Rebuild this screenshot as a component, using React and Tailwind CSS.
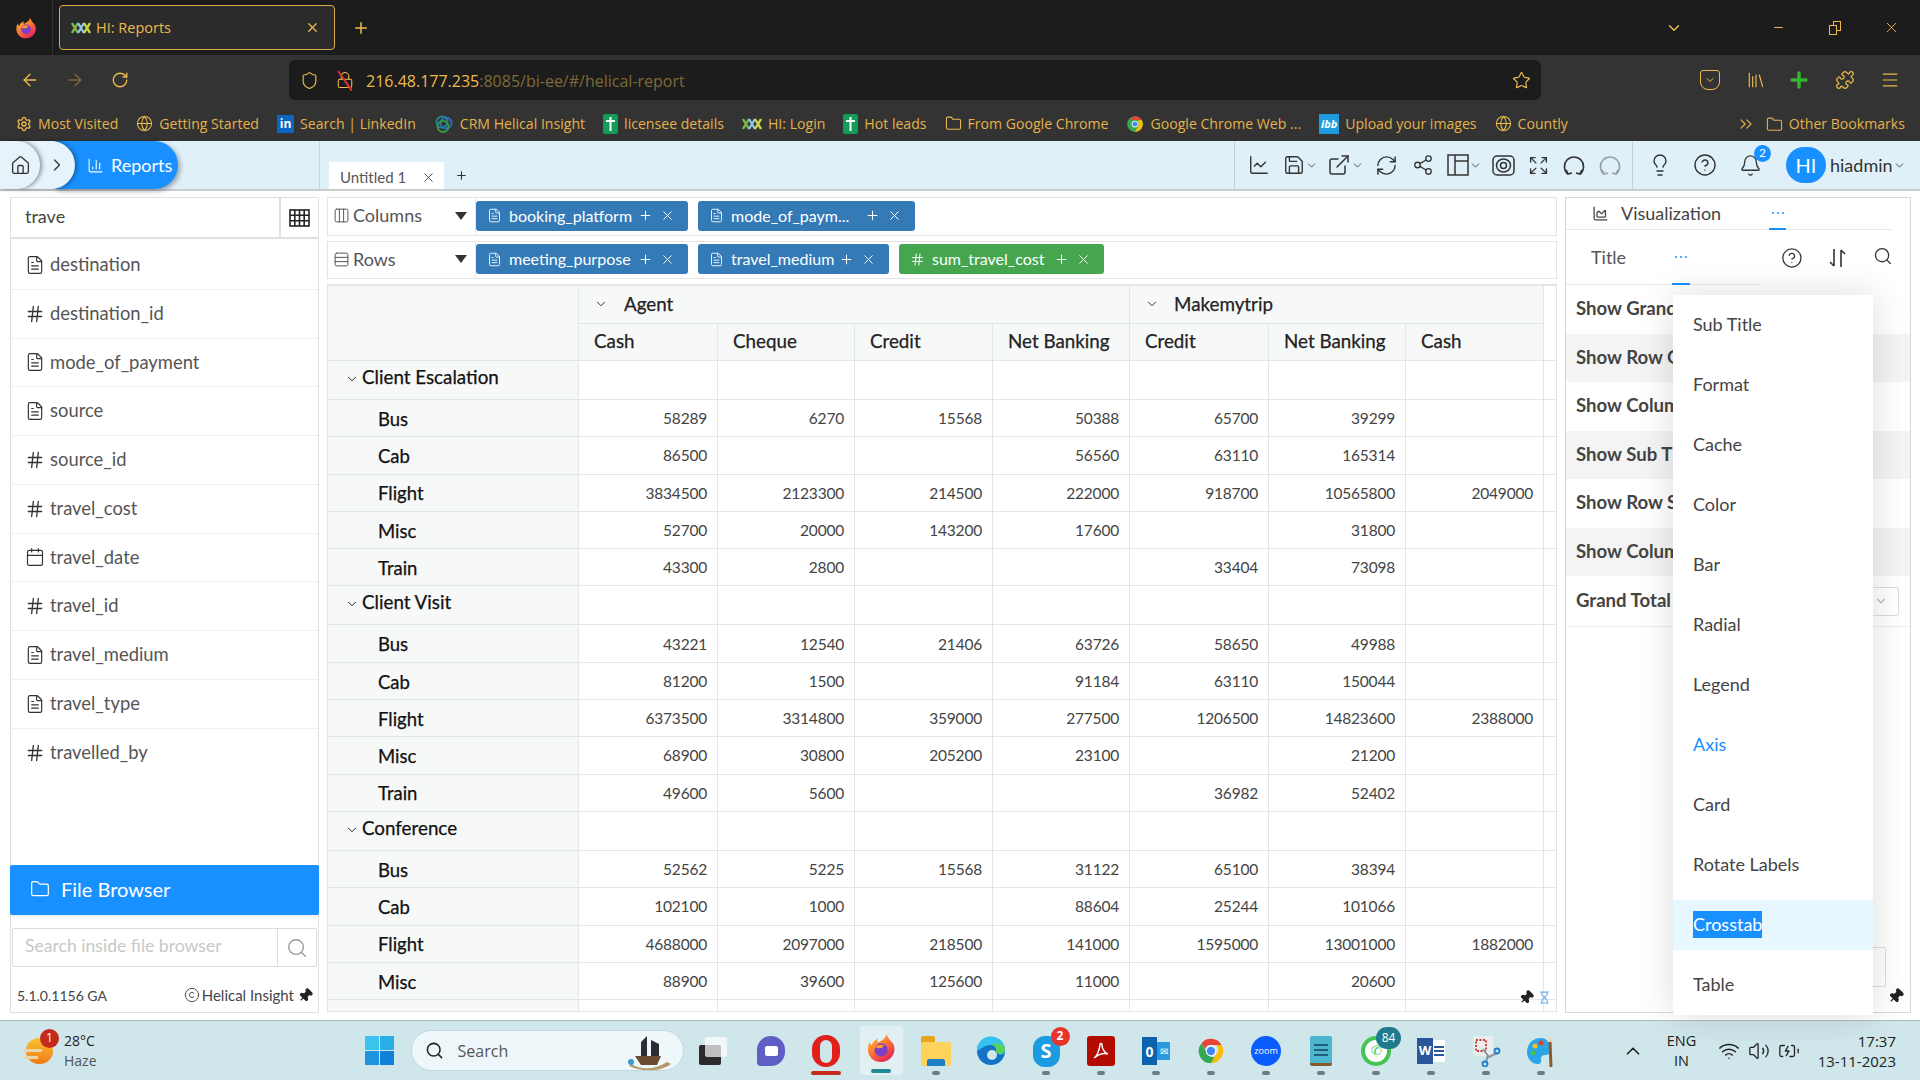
import {
  ArrowLeft, ArrowRight, RotateCw, Star, ChevronDown, ChevronRight, ChevronUp, X, Plus, Minus,
  ChartLine, Save, ExternalLink, RefreshCw, Share2, Expand, Lightbulb, CircleHelp, Bell, Home,
  ChartColumn, FileText, Hash, Calendar, Columns3, Rows3, Folder, Search, Pin,
  Copyright, Globe, Menu, Library, Puzzle, Settings, ChevronsRight, Wifi, Volume2, BatteryCharging,
  Lock, Hourglass, ChartArea, Shield,
} from "lucide-react";

const amber = "#edbb4d";

const HiLogo = () => (
  <svg width="20" height="14" viewBox="0 0 20 14">
    <path d="M1 2l6 10M7 2L1 12" stroke="#7fb84a" strokeWidth="2.4" />
    <path d="M7 2l6 10M13 2L7 12" stroke="#8fc6e8" strokeWidth="2.4" />
    <path d="M13 2l6 10M19 2l-6 10" stroke="#c8d84a" strokeWidth="2.4" />
  </svg>
);

const GreenPlus = () => (
  <div className="flex h-5 w-[15px] items-center justify-center rounded-[2px] bg-[#0f9d58]">
    <svg width="11" height="16" viewBox="0 0 11 16"><path d="M5.5 1v14M1 5h9" stroke="#fff" strokeWidth="2" /></svg>
  </div>
);

const Firefox = ({ size = 22 }) => (
  <svg width={size} height={size} viewBox="0 0 32 32">
    <defs>
      <linearGradient id="ffa" x1="0" y1="0" x2="0.7" y2="1">
        <stop offset="0" stopColor="#ffd43a" />
        <stop offset="0.5" stopColor="#ff7a2f" />
        <stop offset="1" stopColor="#e5245e" />
      </linearGradient>
    </defs>
    <path d="M22 1c1 4 3 6 6 9 3 4 3 9 1 13-3 6-8 8-13 8C8 31 2 25 2 17c0-3 1-6 2-8 0 2 1 3 2 4 1-4 4-6 7-7-1 2-1 3 0 4 4-2 8-4 9-9z" fill="url(#ffa)" />
    <circle cx="16" cy="18" r="7" fill="#7b3fc9" />
    <path d="M9 15c3-3 7-3 11-2-3 1-3 2-2 3-3 0-6 1-9-1z" fill="#ff9a2f" />
  </svg>
);

const Chrome = () => (
  <svg width="28" height="30" viewBox="0 0 32 32">
    <path d="M16 2a14 14 0 0 1 12.1 7H16a7 7 0 0 0-6.6 4.6L5.2 7A14 14 0 0 1 16 2z" fill="#ea4335" />
    <path d="M28.1 9A14 14 0 0 1 16 30l6-10.500A7 7 0 0 0 22 9z" fill="#fbbc05" />
    <path d="M16 30A14 14 0 0 1 5.200 7L11 17a7 7 0 0 0 9 5.500z" fill="#34a853" />
    <circle cx="16" cy="16" r="6" fill="#fff" />
    <circle cx="16" cy="16" r="4.800" fill="#4285f4" />
  </svg>
);

const bookmarks = [
  [<Settings size={16} color={amber} />, "Most Visited"],
  [<Globe size={17} color={amber} strokeWidth={1.5} />, "Getting Started"],
  [<div className="flex h-[18px] w-[17px] items-center justify-center bg-[#0a66c2] text-[12px] font-bold text-white">in</div>, "Search | LinkedIn"],
  [
    <svg width="20" height="20" viewBox="0 0 20 20" fill="none" strokeWidth="1.8">
      <circle cx="8" cy="8" r="5.500" stroke="#1f8a8a" />
      <circle cx="12" cy="9" r="5.500" stroke="#2c6fbb" />
      <circle cx="9" cy="12.500" r="5.500" stroke="#3a9a4a" />
    </svg>,
    "CRM Helical Insight",
  ],
  [<GreenPlus />, "licensee details"],
  [<HiLogo />, "HI: Login"],
  [<GreenPlus />, "Hot leads"],
  [<Folder size={17} color={amber} strokeWidth={1.5} />, "From Google Chrome"],
  [<div className="flex w-[18px]"><svg width="18" height="18" viewBox="0 0 32 32"><circle cx="16" cy="16" r="14" fill="#34a853" /><path d="M16 2a14 14 0 0 1 12.100 7H7A14 14 0 0 1 16 2z" fill="#ea4335" /><path d="M28 9a14 14 0 0 1-12 21l6-11V9z" fill="#fbbc05" /><circle cx="16" cy="16" r="6" fill="#fff" /><circle cx="16" cy="16" r="4.500" fill="#4285f4" /></svg></div>, "Google Chrome Web ..."],
  [<div className="flex h-5 w-5 items-center justify-center bg-[#1d9bdc] text-[11px] font-bold italic text-white">ibb</div>, "Upload your images"],
  [<Globe size={17} color={amber} strokeWidth={1.5} />, "Countly"],
];

function BrowserChrome() {
  return (
    <div className="font-['Open_Sans',sans-serif]">
      <div className="flex h-[55px] items-center bg-[#1c1c1c] text-[#edbb4d]">
        <div className="flex h-full w-[53px] items-center justify-center border-r border-[#333]">
          <Firefox />
        </div>
        <div className="ml-[6px] flex h-[45px] w-[276px] items-center rounded-[4px] border border-[#d9ad46] bg-[#2b2b2b] pl-[11px] pr-[14px]">
          <HiLogo />
          <span className="ml-[5px] text-[14.500px]">HI: Reports</span>
          <X size={15} className="ml-auto" />
        </div>
        <Plus size={18} className="ml-[17px]" />
        <ChevronDown size={18} className="ml-auto" />
        <Minus size={13} className="ml-[89px]" />
        <div className="relative ml-[44px] h-[14px] w-[12px]">
          <div className="absolute right-0 top-0 h-[10px] w-[8px] border border-[#edbb4d]" />
          <div className="absolute bottom-0 left-0 h-[10px] w-[8px] border border-[#edbb4d] bg-[#1c1c1c]" />
        </div>
        <X size={17} strokeWidth={1.3} className="ml-[42px] mr-[20px]" />
      </div>

      <div className="flex h-[55px] items-center bg-[#333] pb-[5px] text-[#edbb4d]">
        <ArrowLeft size={20} strokeWidth={1.6} className="ml-[20px]" />
        <ArrowRight size={20} strokeWidth={1.6} className="ml-[25px] opacity-40" />
        <RotateCw size={18} strokeWidth={1.8} className="ml-[26px]" />
        <div className="ml-[160px] flex h-10 w-[1252px] items-center rounded-[6px] bg-[#1c1c1c] pl-[11px] pr-[10px]">
          <Shield size={19} strokeWidth={1.4} />
          <div className="relative ml-[17px]">
            <Lock size={18} strokeWidth={1.4} />
            <div className="absolute left-[8px] top-[-2px] h-[24px] w-[1.5px] -rotate-[35deg] bg-[#e0342c]" />
          </div>
          <span className="ml-[12px] pt-[2px] text-[16px]">
            216.48.177.235<span className="text-[#7d6a38]">:8085/bi-ee/#/helical-report</span>
          </span>
          <Star size={19} strokeWidth={1.5} className="ml-auto" />
        </div>
        <div className="ml-[159px] flex h-5 w-5 items-center justify-center rounded-b-[8px] rounded-t-[3px] border-[1.5px] border-[#edbb4d]">
          <ChevronDown size={12} />
        </div>
        <Library size={20} strokeWidth={1.4} className="ml-[26px]" />
        <Plus size={24} strokeWidth={3.5} color="#37b332" className="ml-[21px]" />
        <Puzzle size={20} strokeWidth={1.5} className="ml-[24px]" />
        <Menu size={20} strokeWidth={1.4} className="ml-[25px]" />
      </div>

      <div className="flex h-[31px] items-center bg-[#333] pb-[3px] pl-[16px] pr-[15px] text-[14.100px] text-[#e3b24a]">
        <div className="flex items-center gap-[18px]">
          {bookmarks.map(([icon, label]) => (
            <div key={label} className="flex items-center gap-[6px] whitespace-nowrap">
              {icon}
              <span>{label}</span>
            </div>
          ))}
        </div>
        <ChevronsRight size={20} strokeWidth={1.4} className="ml-auto" />
        <Folder size={17} strokeWidth={1.5} className="ml-[10px]" />
        <span className="ml-[6px]">Other Bookmarks</span>
      </div>
    </div>
  );
}

const ArcIcon = ({ gray }) => (
  <svg width="22" height="24" viewBox="0 0 22 24" fill="none" stroke={gray ? "#9aa0a3" : "#333"} strokeWidth="1.7">
    <path d="M5 21c-5-4-4-11-1-14 4-4 10-4 14 0 3 3 4 10-1 14" />
    <path d="M3 17l2 4 4-1M19 17l-2 4-4-1" />
  </svg>
);

function AppHeader() {
  return (
    <div className="flex h-[50px] items-stretch border-b-2 border-[#c9cdd0] bg-[#dff0f9] text-[#333]">
      <div className="flex w-[320px] border-r border-[#c9d6dd]">
        <div className="z-20 flex w-10 items-center justify-center rounded-r-full bg-[#e6f3fa] shadow-[2px_0_4px_rgba(0,0,0,0.4)]">
          <Home size={21} strokeWidth={1.5} />
        </div>
        <div className="z-10 -ml-5 flex w-[55px] items-center justify-end rounded-r-full bg-[#e6f3fa] pr-[8px] shadow-[2px_0_4px_rgba(0,0,0,0.35)]">
          <ChevronRight size={20} strokeWidth={1.5} />
        </div>
        <div className="-ml-5 flex w-[123px] items-center gap-[7px] rounded-r-full bg-[#1890ff] pl-[32px] text-[18px] text-white shadow-[2px_2px_5px_rgba(0,0,0,0.35)]">
          <ChartColumn size={17} strokeWidth={1.5} />
          Reports
        </div>
      </div>
      <div className="ml-[9px] flex items-end">
        <div className="flex h-[27px] w-[115px] items-center bg-white pl-[11px] pr-2 pt-[4px] text-[15px] text-[#555]">
          Untitled 1
          <X size={15} strokeWidth={1.3} className="ml-auto text-[#333]" />
        </div>
        <div className="ml-[7px] flex h-[27px] w-[21px] items-center justify-center">
          <Plus size={13} />
        </div>
      </div>
      <div className="ml-auto flex w-[686px] items-center border-l border-[#c3cdd2] pl-[13px]">
        <ChartLine size={22} strokeWidth={1.5} />
        <Save size={22} strokeWidth={1.5} className="ml-[13px]" />
        <ChevronDown size={13} strokeWidth={1.5} />
        <ExternalLink size={24} strokeWidth={1.5} className="ml-[9px]" />
        <ChevronDown size={13} strokeWidth={1.5} />
        <RefreshCw size={23} strokeWidth={1.5} className="ml-[11px]" />
        <Share2 size={22} strokeWidth={1.4} className="ml-[14px]" />
        <svg width="22" height="22" viewBox="0 0 22 22" fill="none" stroke="#333" strokeWidth="1.500" className="ml-[13px]">
          <rect x="1" y="1" width="20" height="20" />
          <path d="M8 1v20M8 7h13" />
        </svg>
        <ChevronDown size={13} strokeWidth={1.5} />
        <svg width="23" height="21" viewBox="0 0 23 21" fill="none" stroke="#333" strokeWidth="1.500" className="ml-[10px]">
          <rect x="1" y="1" width="21" height="19" rx="4" />
          <ellipse cx="11.500" cy="10.500" rx="7" ry="6.500" />
          <circle cx="11.500" cy="10.500" r="3" />
        </svg>
        <Expand size={21} strokeWidth={1.6} className="ml-[13px]" />
        <div className="ml-[14px] flex">
          <ArcIcon />
        </div>
        <div className="ml-[14px] flex">
          <ArcIcon gray />
        </div>
        <div className="ml-[11px] flex h-full flex-1 items-center border-l border-[#c3cdd2] pl-[15px]">
          <Lightbulb size={24} strokeWidth={1.4} />
          <CircleHelp size={24} strokeWidth={1.4} className="ml-[21px]" />
          <div className="relative ml-[22px]">
            <Bell size={23} strokeWidth={1.4} />
            <div className="absolute -right-[9px] -top-[9px] flex h-[17px] w-[17px] items-center justify-center rounded-full bg-[#1890ff] text-[12px] text-white">
              2
            </div>
          </div>
          <div className="ml-[24px] flex h-9 w-10 items-center justify-center rounded-full bg-[#1890ff] text-[20px] text-white">
            HI
          </div>
          <span className="ml-[4px] text-[18px]">hiadmin</span>
          <ChevronDown size={13} strokeWidth={1.5} />
        </div>
      </div>
    </div>
  );
}

const fields = [
  ["t", "destination"],
  ["h", "destination_id"],
  ["t", "mode_of_payment"],
  ["t", "source"],
  ["h", "source_id"],
  ["h", "travel_cost"],
  ["d", "travel_date"],
  ["h", "travel_id"],
  ["t", "travel_medium"],
  ["t", "travel_type"],
  ["h", "travelled_by"],
];

function FieldIcon({ type }) {
  if (type === "h") return <Hash size={20} strokeWidth={1.6} className="text-[#333]" />;
  if (type === "d") return <Calendar size={20} strokeWidth={1.4} className="text-[#333]" />;
  return <FileText size={20} strokeWidth={1.4} className="text-[#333]" />;
}

function Sidebar() {
  return (
    <div className="flex w-[310px] flex-col border border-[#e0e0e0] bg-white">
      <div className="flex h-[41px] border-b-2 border-[#e0e0e0]">
        <div className="flex flex-1 items-center border-r-2 border-[#e0e0e0] pb-[2px] pl-[14px] text-[18px] text-[#444]">trave</div>
        <div className="flex w-[37px] items-center justify-center">
          <svg width="21" height="18" viewBox="0 0 21 18" fill="none" stroke="#222" strokeWidth="1.600">
            <rect x="1" y="1" width="19" height="16" />
            <path d="M1 6.300h19M1 11.700h19M5.800 1v16M10.500 1v16M15.200 1v16" />
          </svg>
        </div>
      </div>
      <div className="flex-1 pt-[2px]">
        {fields.map(([type, name]) => (
          <div key={name} className="flex h-[48.750px] items-center gap-[5px] border-b border-[#f0f0f0] pl-[14px] text-[18.400px] text-[#555] last:border-b-0">
            <FieldIcon type={type} />
            {name}
          </div>
        ))}
      </div>
      <div className="-mx-px flex h-[50px] items-center gap-[11px] rounded-[2px] bg-[#1890ff] pb-[3px] pl-[20px] text-[20px] text-white shadow-[0_3px_3px_rgba(0,0,0,0.06)]">
        <Folder size={20} strokeWidth={1.5} />
        File Browser
      </div>
      <div className="mx-[1px] mt-[13px] flex h-[39px] rounded-[2px] border border-[#dcdcdc]">
        <div className="flex flex-1 items-center border-r border-[#dcdcdc] pb-[2px] pl-[12px] text-[17.600px] text-[#c8c8c8]">Search inside file browser</div>
        <div className="flex w-[38px] items-center justify-center text-[#999]">
          <Search size={22} strokeWidth={1.5} />
        </div>
      </div>
      <div className="flex h-[45px] items-center pl-[6px] pr-[5px] pt-[11px] text-[14px] text-[#444]">
        5.1.0.1156 GA
        <div className="ml-auto flex items-center gap-[2px] text-[15px]">
          <Copyright size={16} strokeWidth={1.4} />
          Helical Insight
          <Pin size={15} fill="#222" className="ml-[2px] rotate-45 text-[#222]" />
        </div>
      </div>
    </div>
  );
}

function FieldPill({ icon, name, green, w }) {
  return (
    <div className={`flex h-[30px] items-center rounded-[3px] pl-[11px] pr-[13px] text-[16px] text-white ${green ? "bg-[#45a64f]" : "bg-[#337ab7]"} ${w}`}>
      {icon === "h" ? <Hash size={15} strokeWidth={1.6} /> : <FileText size={15} strokeWidth={1.4} />}
      <span className="ml-[7px]">{name}</span>
      <Plus size={15} strokeWidth={1.6} className="ml-auto" />
      <X size={15} strokeWidth={1.6} className="ml-[7px]" />
    </div>
  );
}

function ShelfRow({ icon, label, h, children }) {
  return (
    <div className={`flex items-center border border-[#e4e4e4] bg-white ${h}`}>
      <div className="flex h-full w-[147px] items-center pb-[2px] pl-[5px] text-[18px] text-[#555]">
        {icon}
        <span className="ml-[3px]">{label}</span>
        <div className="ml-auto mr-[8px] h-0 w-0 border-x-[6px] border-t-[8px] border-x-transparent border-t-[#333]" />
      </div>
      <div className="flex h-full items-center gap-[10px] border-l border-[#e4e4e4] pb-[2px]">{children}</div>
    </div>
  );
}

const groups = [
  ["Client Escalation", [
    ["Bus", "58289", "6270", "15568", "50388", "65700", "39299", ""],
    ["Cab", "86500", "", "", "56560", "63110", "165314", ""],
    ["Flight", "3834500", "2123300", "214500", "222000", "918700", "10565800", "2049000"],
    ["Misc", "52700", "20000", "143200", "17600", "", "31800", ""],
    ["Train", "43300", "2800", "", "", "33404", "73098", ""],
  ]],
  ["Client Visit", [
    ["Bus", "43221", "12540", "21406", "63726", "58650", "49988", ""],
    ["Cab", "81200", "1500", "", "91184", "63110", "150044", ""],
    ["Flight", "6373500", "3314800", "359000", "277500", "1206500", "14823600", "2388000"],
    ["Misc", "68900", "30800", "205200", "23100", "", "21200", ""],
    ["Train", "49600", "5600", "", "", "36982", "52402", ""],
  ]],
  ["Conference", [
    ["Bus", "52562", "5225", "15568", "31122", "65100", "38394", ""],
    ["Cab", "102100", "1000", "", "88604", "25244", "101066", ""],
    ["Flight", "4688000", "2097000", "218500", "141000", "1595000", "13001000", "1882000"],
    ["Misc", "88900", "39600", "125600", "11000", "", "20600", ""],
  ]],
];

const cols = "grid grid-cols-[251px_139px_137px_138px_137px_139px_137px_138px_13px]";
const cell = "border-b border-r border-[#e4e7ea]";
const blanks = [0, 1, 2, 3, 4, 5, 6, 7];
const heavy = "[-webkit-text-stroke:0.25px_currentColor]";

function Crosstab() {
  return (
    <div className="flex-1 overflow-hidden border-x border-t-2 border-[#e4e4e4] bg-white">
      <div className={cols}>
        <div className={`row-span-2 bg-[#f7f8f8] ${cell}`} />
        <div className={`col-span-4 flex h-[37.500px] items-center bg-[#f7f8f8] pl-[15px] text-[18.800px] text-[#222] ${heavy} ${cell}`}>
          <ChevronDown size={14} strokeWidth={1.6} />
          <span className="ml-[16px]">Agent</span>
        </div>
        <div className={`col-span-3 flex h-[37.500px] items-center bg-[#f7f8f8] pl-[15px] text-[18.800px] text-[#222] ${heavy} ${cell}`}>
          <ChevronDown size={14} strokeWidth={1.6} />
          <span className="ml-[15px]">Makemytrip</span>
        </div>
        <div className={`row-span-2 bg-white ${cell}`} />
        {["Cash", "Cheque", "Credit", "Net Banking", "Credit", "Net Banking", "Cash"].map((c, i) => (
          <div key={i} className={`flex h-[37.500px] items-center bg-[#f7f8f8] pb-[2px] pl-[15px] text-[18.800px] text-[#222] ${heavy} ${cell}`}>
            {c}
          </div>
        ))}
      </div>
      {groups.map(([name, rows]) => (
        <div key={name}>
          <div className={cols}>
            <div className={`flex h-[39px] items-start bg-[#f7f8f8] pl-[17px] pt-[2px] text-[18.800px] text-[#111] ${heavy} ${cell}`}>
              <ChevronDown size={14} strokeWidth={1.6} className="mt-[9px]" />
              <span className="ml-[3px]">{name}</span>
            </div>
            {blanks.map((b) => <div key={b} className={cell} />)}
          </div>
          {rows.map(([label, ...vals]) => (
            <div key={label} className={cols}>
              <div className={`flex h-[37.300px] items-center bg-[#f7f8f8] pl-[50px] pt-[3px] text-[18.500px] text-[#111] ${heavy} ${cell}`}>{label}</div>
              {vals.map((v, i) => (
                <div key={i} className={`flex items-center justify-end pr-[10px] pt-[1px] text-[15.500px] tracking-[-0.2px] text-[#444] ${cell}`}>{v}</div>
              ))}
              <div className={cell} />
            </div>
          ))}
        </div>
      ))}
      <div className={cols}>
        <div className={`h-[12px] bg-[#f7f8f8] ${cell}`} />
        {blanks.map((b) => <div key={b} className={cell} />)}
      </div>
    </div>
  );
}

const configRows = [
  ["Show Grand", false],
  ["Show Row G", true],
  ["Show Colum", false],
  ["Show Sub T", true],
  ["Show Row S", false],
  ["Show Colum", true],
];

const menuItems = ["Sub Title", "Format", "Cache", "Color", "Bar", "Radial", "Legend", "Axis", "Card", "Rotate Labels"];

const BlueDots = () => (
  <div className="flex gap-[3px]">
    <div className="h-[2px] w-[2px] rounded-full bg-[#1890ff]" />
    <div className="h-[2px] w-[2px] rounded-full bg-[#1890ff]" />
    <div className="h-[2px] w-[2px] rounded-full bg-[#1890ff]" />
  </div>
);

function SortIcon() {
  return (
    <svg width="18" height="20" viewBox="0 0 18 20" fill="none" stroke="#333" strokeWidth="1.600">
      <path d="M5 1v17M1 14l4 4" />
      <path d="M12 19V2M12 2l4 4" />
    </svg>
  );
}

function RightPanel() {
  return (
    <div className="relative flex w-[346px] flex-col border border-[#d8d8d8] bg-white">
      <div className="mr-[18px] flex h-[32px] items-center border-b border-[#e8e8e8] pl-[26px] text-[18px] text-[#444]">
        <ChartArea size={17} strokeWidth={1.8} />
        <span className="ml-[12px]">Visualization</span>
        <div className="relative ml-[48px] flex h-full w-[17px] items-center justify-center pb-[2px]">
          <BlueDots />
          <div className="absolute -bottom-px left-0 h-[2px] w-full bg-[#1890ff]" />
        </div>
      </div>
      <div className="flex h-[55px] items-center pr-[17px]">
        <div className="flex h-full w-[197px] items-center border-b border-[#e8e8e8] pl-[25px] text-[18px] text-[#555]">
          Title
          <div className="relative ml-[46px] flex h-full w-[18px] items-center justify-center">
            <BlueDots />
            <div className="absolute -bottom-px left-0 h-[2px] w-full bg-[#1890ff]" />
          </div>
        </div>
        <CircleHelp size={22} strokeWidth={1.4} className="ml-[20px] text-[#333]" />
        <div className="ml-[26px] flex"><SortIcon /></div>
        <Search size={20} strokeWidth={1.6} className="mb-[3px] ml-[26px] text-[#333]" />
      </div>
      {configRows.map(([label, gray], i) => (
        <div key={i} className={`flex h-[48.500px] items-center overflow-hidden pl-[10px] text-[18.600px] font-bold text-[#444] ${gray ? "bg-[#f4f4f4]" : "bg-white"}`}>
          {label}
        </div>
      ))}
      <div className="flex h-[51px] items-center border-b border-[#ececec] pl-[10px] pr-[11px] text-[18.600px] font-bold text-[#444]">
        Grand Total
        <div className="ml-auto flex h-[29px] w-[60px] items-center justify-end rounded-[2px] border border-[#ddd] pr-[10px]">
          <ChevronDown size={14} className="text-[#bbb]" />
        </div>
      </div>
      <div className="absolute bottom-[25px] right-[24px] h-[40px] w-[30px] rounded-[2px] border border-[#ddd]" />
      <Pin size={16} fill="#222" className="absolute bottom-[8px] right-[6px] rotate-45 text-[#222]" />

      <div className="absolute left-[107px] top-[97px] z-10 h-[720px] w-[200px] rounded-[2px] bg-white shadow-[0_0_36px_rgba(0,0,0,0.14)]">
        {menuItems.map((m) => (
          <div key={m} className={`flex h-[60px] items-center pb-[2px] pl-5 text-[18px] ${m === "Axis" ? "text-[#1890ff]" : "text-[#444]"}`}>
            {m}
          </div>
        ))}
        <div className="mt-[5px] flex h-[50px] items-center bg-[#e6f7ff] pb-[2px] pl-5 text-[18px]">
          <span className="bg-[#1890ff] text-white">Crosstab</span>
        </div>
        <div className="mt-[5px] flex h-[60px] items-center pb-[2px] pl-5 text-[18px] text-[#444]">Table</div>
      </div>
    </div>
  );
}

const Dot = ({ c = "#6f7b80", w = "w-[8px]" }) => <div className={`mt-[2px] h-[4px] rounded-full ${w}`} style={{ background: c }} />;

function TaskIcon({ children, dot, w, c, className }) {
  return (
    <div className={`flex w-[55px] flex-col items-center justify-end ${className || ""}`}>
      <div className="flex h-[36px] items-center justify-center">{children}</div>
      {dot ? <Dot w={w} c={c} /> : <div className="mt-[2px] h-[4px]" />}
    </div>
  );
}

const Badge = ({ n, c, wide }) => (
  <div className={`absolute -right-[10px] -top-[9px] flex items-center justify-center rounded-full text-[12px] text-white ${wide ? "h-[22px] w-[25px]" : "h-[19px] w-[19px]"}`} style={{ background: c }}>
    {n}
  </div>
);

function Taskbar() {
  return (
    <div className="flex h-[60px] items-center border-t border-[#a9bcc4] bg-[#cfe6ea] font-['Open_Sans',sans-serif] text-[#222]">
      <div className="relative ml-[26px] h-[26px] w-[27px] rounded-full bg-gradient-to-b from-[#f8c22f] to-[#f07a1a]">
        <div className="absolute left-[-2px] top-[11px] h-[3px] w-[18px] bg-[#e8d6a8]" />
        <div className="absolute left-[-2px] top-[18px] h-[3px] w-[14px] bg-[#e8d6a8]" />
        <div className="absolute -right-[6px] -top-[9px] flex h-[19px] w-[19px] items-center justify-center rounded-full bg-[#c42b1c] text-[12px] text-white">1</div>
      </div>
      <div className="ml-[11px] text-[14px] leading-[20px]">
        <div>28°C</div>
        <div className="text-[#555]">Haze</div>
      </div>
      <div className="ml-[268px] grid h-[29px] w-[29px] grid-cols-2 gap-[1px]">
        <div className="bg-[#3cc4ee]" />
        <div className="bg-[#2aaee8]" />
        <div className="bg-[#1d94e0]" />
        <div className="bg-[#1080d8]" />
      </div>
      <div className="relative ml-[17px] flex h-[41px] w-[273px] items-center rounded-full border border-[#c2d8dc] bg-[#eef7f9] pl-[13px] text-[16px] text-[#555]">
        <Search size={19} strokeWidth={2} className="text-[#222]" />
        <span className="ml-[14px]">Search</span>
        <svg width="52" height="44" viewBox="0 0 52 44" className="absolute right-[8px] top-[-1px]">
          <path d="M8 34c10 6 24 6 36-2l4 2c-10 8-30 8-42 2z" fill="#b89868" />
          <path d="M12 26h26l-4 9H18z" fill="#6a4a30" />
          <path d="M18 12l6-6v20h-6zM28 10l8 4v12h-8z" fill="#2c2c34" />
          <circle cx="8" cy="32" r="3" fill="#3a9ad0" />
        </svg>
      </div>
      <div className="ml-[2px] flex items-end">
        <TaskIcon>
          <div className="relative h-[28px] w-[28px]">
            <div className="absolute bottom-0 left-0 h-[20px] w-[22px] rounded-[2px] bg-[#2b2b2b]" />
            <div className="absolute right-0 top-0 h-[20px] w-[22px] rounded-[2px] bg-white/70" />
          </div>
        </TaskIcon>
        <TaskIcon className="ml-[3px]">
          <div className="flex h-[30px] w-[28px] items-center justify-center rounded-[14px] rounded-bl-[4px] bg-[#5f5ec5]">
            <div className="h-[10px] w-[13px] rounded-[2px] bg-white" />
          </div>
        </TaskIcon>
        <TaskIcon dot w="w-[30px]" c="#c42b1c">
          <div className="flex h-[32px] w-[28px] items-center justify-center rounded-full bg-[#e0201b]">
            <div className="h-[23px] w-[12px] rounded-full bg-[#cfe6ea]" />
          </div>
        </TaskIcon>
        <div className="flex h-[49px] w-[55px] items-end justify-center">
          <div className="flex h-[49px] w-[43px] flex-col items-center justify-end rounded-[4px] bg-[#e2f0f4] pb-[2px]">
            <div className="mb-[4px]"><Firefox size={30} /></div>
            <Dot w="w-[20px]" c="#1f8a96" />
          </div>
        </div>
        <TaskIcon dot>
          <div className="relative h-[30px] w-[30px]">
            <div className="absolute left-0 top-0 h-[12px] w-[14px] rounded-t-[2px] bg-[#e8a51c]" />
            <div className="absolute bottom-0 h-[24px] w-[30px] rounded-[2px] bg-[#fdd35c]" />
            <div className="absolute bottom-0 left-[6px] h-[7px] w-[18px] rounded-t-[2px] bg-[#1f80c8]" />
          </div>
        </TaskIcon>
        <TaskIcon>
          <svg width="30" height="30" viewBox="0 0 30 30">
            <circle cx="15" cy="15" r="14" fill="#1273c4" />
            <path d="M1 15a14 14 0 0 1 28-1c0 5-6 6-7 3 0-5-4-8-8-8-5 0-9 4-13 6z" fill="#35c1f1" />
            <path d="M29 13c0 5-6 7-9 3 1-4-2-8-6-7 8-4 15 0 15 4z" fill="#5ad15c" />
            <circle cx="16" cy="19" r="5" fill="#cfe6ea" />
          </svg>
        </TaskIcon>
        <TaskIcon dot>
          <div className="relative flex h-[31px] w-[27px] items-center justify-center rounded-[12px] bg-[#1b9ce0] text-[20px] font-bold text-white">
            S
            <Badge n="2" c="#e6352b" />
          </div>
        </TaskIcon>
        <TaskIcon dot>
          <div className="flex h-[30px] w-[28px] items-center justify-center rounded-[3px] bg-[#b30b00]">
            <svg width="18" height="18" viewBox="0 0 18 18" fill="none" stroke="#fff" strokeWidth="1.500"><path d="M2 16c3-2 5-7 6-13 0-2 2-2 2 0 0 4 3 8 6 9-4-1-9 0-14 4z" /></svg>
          </div>
        </TaskIcon>
        <TaskIcon dot>
          <div className="relative flex h-[30px] w-[28px] items-center">
            <div className="z-10 flex h-[28px] w-[16px] items-center justify-center bg-[#0d62ad] text-[14px] font-bold text-white">0</div>
            <div className="flex h-[18px] w-[14px] items-center justify-center bg-[#2a9ae0] text-[10px] text-white">✉</div>
          </div>
        </TaskIcon>
        <TaskIcon dot><Chrome /></TaskIcon>
        <TaskIcon dot>
          <div className="flex h-[30px] w-[30px] items-center justify-center rounded-full bg-[#0b5cff] text-[9px] text-white">zoom</div>
        </TaskIcon>
        <TaskIcon dot>
          <div className="flex h-[30px] w-[22px] flex-col justify-center gap-[3px] rounded-[2px] border-b-[3px] border-[#8a5a2c] bg-[#4cb5d0] px-[4px]">
            <div className="h-[2px] bg-[#1f5f7a]" />
            <div className="h-[2px] bg-[#1f5f7a]" />
            <div className="h-[2px] bg-[#1f5f7a]" />
          </div>
        </TaskIcon>
        <TaskIcon dot>
          <div className="relative flex h-[30px] w-[30px] items-center justify-center rounded-full bg-[#44c553]">
            <div className="flex h-[22px] w-[22px] items-center justify-center rounded-full bg-white text-[13px] text-[#44c553]">✆</div>
            <Badge n="84" c="#1f7a8c" wide />
          </div>
        </TaskIcon>
        <TaskIcon dot>
          <div className="flex h-[30px] w-[28px] items-center">
            <div className="z-10 flex h-[26px] w-[16px] items-center justify-center bg-[#2b579a] text-[13px] font-bold text-white">W</div>
            <div className="flex h-[22px] w-[12px] flex-col justify-center gap-[2px] bg-white px-[1px]">
              <div className="h-[2px] bg-[#2b579a]" />
              <div className="h-[2px] bg-[#2b579a]" />
              <div className="h-[2px] bg-[#2b579a]" />
            </div>
          </div>
        </TaskIcon>
        <TaskIcon dot>
          <svg width="30" height="32" viewBox="0 0 30 32" fill="none">
            <rect x="2" y="1" width="20" height="20" rx="2" fill="#e9edee" />
            <rect x="5" y="5" width="10" height="11" stroke="#d0342c" strokeWidth="1.800" strokeDasharray="2 1.500" />
            <path d="M12 14l6 8 8-4M17 20l-2 7" stroke="#8a9296" strokeWidth="2" />
            <circle cx="26" cy="16" r="2.500" stroke="#1a80d0" strokeWidth="1.800" />
            <circle cx="14" cy="29" r="2.500" stroke="#1a80d0" strokeWidth="1.800" />
          </svg>
        </TaskIcon>
        <TaskIcon dot>
          <svg width="30" height="32" viewBox="0 0 30 32">
            <path d="M15 3C7 3 1 9 1 17c0 7 6 13 12 12 3-1 2-4 2-6s2-3 4-3c3 0 6-2 6-6 0-6-4-11-10-11z" fill="#2aa5e8" />
            <circle cx="9" cy="11" r="2.500" fill="#f3c225" />
            <circle cx="15" cy="8" r="2.500" fill="#e5402d" />
            <circle cx="7" cy="18" r="2.500" fill="#4cc04a" />
            <path d="M24 6l1 26" stroke="#8a5a2c" strokeWidth="3" />
            <path d="M24 2l-3 5h6z" fill="#e8d6a8" />
          </svg>
        </TaskIcon>
      </div>
      <ChevronUp size={22} strokeWidth={1.8} className="ml-[53px]" />
      <div className="ml-[18px] flex w-[40px] flex-col items-center text-[14.500px] leading-[20px]">
        <span>ENG</span>
        <span>IN</span>
      </div>
      <Wifi size={22} strokeWidth={1.7} className="ml-[16px]" />
      <Volume2 size={22} strokeWidth={1.4} className="ml-[8px]" />
      <BatteryCharging size={22} strokeWidth={1.4} className="ml-[8px]" />
      <div className="ml-auto mr-6 flex flex-col items-end text-[15px] leading-[20px]">
        <span>17:37</span>
        <span>13-11-2023</span>
      </div>
    </div>
  );
}

export default function App() {
  return (
    <div className="flex h-[1080px] w-[1920px] flex-col overflow-hidden bg-white font-['Lato',sans-serif]">
      <BrowserChrome />
      <AppHeader />
      <div className="flex min-h-0 flex-1 gap-[8px] pb-[7px] pl-[10px] pr-[9px] pt-[6px]">
        <Sidebar />
        <div className="relative flex w-[1230px] flex-col gap-[5px]">
          <ShelfRow icon={<Columns3 size={17} strokeWidth={1.4} />} label="Columns" h="h-[39px]">
            <FieldPill name="booking_platform" w="w-[212px]" />
            <FieldPill name="mode_of_paym..." w="w-[217px]" />
          </ShelfRow>
          <ShelfRow icon={<Rows3 size={17} strokeWidth={1.4} />} label="Rows" h="h-[38px]">
            <FieldPill name="meeting_purpose" w="w-[212px]" />
            <FieldPill name="travel_medium" w="w-[191px]" />
            <FieldPill name="sum_travel_cost" icon="h" green w="w-[205px]" />
          </ShelfRow>
          <Crosstab />
          <Pin size={15} fill="#222" className="absolute bottom-[8px] right-[23px] rotate-45 text-[#222]" />
          <Hourglass size={13} className="absolute bottom-[9px] right-[6px] text-[#6fb0ea]" />
        </div>
        <RightPanel />
      </div>
      <Taskbar />
    </div>
  );
}
